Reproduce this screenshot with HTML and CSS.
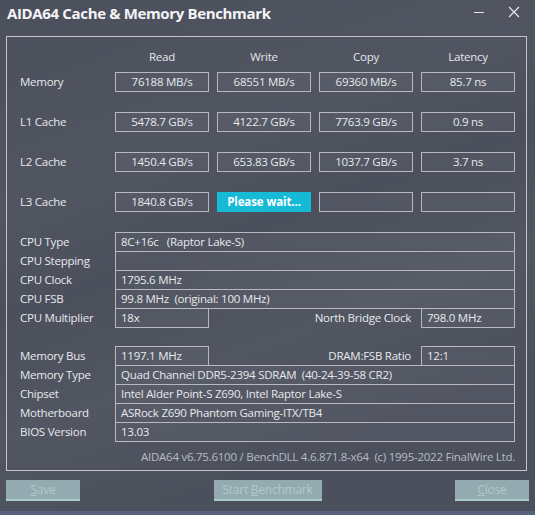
FILE: index.html
```html
<!DOCTYPE html>
<html>
<head>
<meta charset="utf-8">
<link rel="stylesheet" href="styles.css">
</head>
<body>
<div class="window">
  <div class="titlebar">
    <div class="title">AIDA64 Cache &amp; Memory Benchmark</div>
    <div class="controls">
      <svg class="ctl" width="12" height="12" viewBox="0 0 12 12"><line x1="1" y1="6.5" x2="11" y2="6.5" stroke="#e8e8ec" stroke-width="1"/></svg>
      <svg class="ctl" width="12" height="12" viewBox="0 0 12 12"><path d="M1 1 L11 11 M11 1 L1 11" stroke="#e8e8ec" stroke-width="1.2" fill="none"/></svg>
    </div>
  </div>
  <div class="frame">
    <div class="bench heads">
      <div></div>
      <div class="head">Read</div>
      <div class="head">Write</div>
      <div class="head">Copy</div>
      <div class="head">Latency</div>
    </div>
    <div class="bench rows">
      <div class="label">Memory</div>
      <div class="box">76188 MB/s</div>
      <div class="box">68551 MB/s</div>
      <div class="box">69360 MB/s</div>
      <div class="box">85.7 ns</div>

      <div class="label">L1 Cache</div>
      <div class="box">5478.7 GB/s</div>
      <div class="box">4122.7 GB/s</div>
      <div class="box">7763.9 GB/s</div>
      <div class="box">0.9 ns</div>

      <div class="label">L2 Cache</div>
      <div class="box">1450.4 GB/s</div>
      <div class="box">653.83 GB/s</div>
      <div class="box">1037.7 GB/s</div>
      <div class="box">3.7 ns</div>

      <div class="label">L3 Cache</div>
      <div class="box">1840.8 GB/s</div>
      <div class="box wait">Please wait...</div>
      <div class="box"></div>
      <div class="box"></div>
    </div>

    <div class="info first">
      <div class="irow"><div class="ilabel">CPU Type</div><div class="ival full">8C+16c&nbsp;&nbsp; (Raptor Lake-S)</div></div>
      <div class="irow"><div class="ilabel">CPU Stepping</div><div class="ival full"></div></div>
      <div class="irow"><div class="ilabel">CPU Clock</div><div class="ival full">1795.6 MHz</div></div>
      <div class="irow"><div class="ilabel">CPU FSB</div><div class="ival full">99.8 MHz&nbsp; (original: 100 MHz)</div></div>
      <div class="irow"><div class="ilabel">CPU Multiplier</div><div class="split"><div class="ival small">18x</div><div class="mid">North Bridge Clock</div><div class="ival small">798.0 MHz</div></div></div>
    </div>

    <div class="info second">
      <div class="irow"><div class="ilabel">Memory Bus</div><div class="split"><div class="ival small">1197.1 MHz</div><div class="mid">DRAM:FSB Ratio</div><div class="ival small">12:1</div></div></div>
      <div class="irow"><div class="ilabel">Memory Type</div><div class="ival full">Quad Channel DDR5-2394 SDRAM&nbsp; (40-24-39-58 CR2)</div></div>
      <div class="irow"><div class="ilabel">Chipset</div><div class="ival full">Intel Alder Point-S Z690, Intel Raptor Lake-S</div></div>
      <div class="irow"><div class="ilabel">Motherboard</div><div class="ival full">ASRock Z690 Phantom Gaming-ITX/TB4</div></div>
      <div class="irow"><div class="ilabel">BIOS Version</div><div class="ival full">13.03</div></div>
    </div>

    <div class="copyright">AIDA64 v6.75.6100 / BenchDLL 4.6.871.8-x64&nbsp; (c) 1995-2022 FinalWire Ltd.</div>
  </div>
  <div class="buttons">
    <div class="btn small-btn"><u>S</u>ave</div>
    <div class="btn wide-btn">Start <u>B</u>enchmark</div>
    <div class="btn small-btn"><u>C</u>lose</div>
  </div>
  <div class="strip"></div>
</div>
</body>
</html>
```
FILE: styles.css
```css
html, body {
  margin: 0;
  padding: 0;
}
body {
  width: 535px;
  height: 515px;
  overflow: hidden;
  font-family: "Open Sans", "Noto Sans", "Liberation Sans", sans-serif;
  font-size: 11.5px;
  letter-spacing: -0.25px;
  color: #e8e9ec;
}
.window {
  width: 535px;
  height: 515px;
  display: flex;
  flex-direction: column;
  background:
    linear-gradient(160deg, rgba(255,255,255,0.00) 0%, rgba(255,255,255,0.03) 30%, rgba(255,255,255,0.00) 45%, rgba(255,255,255,0.035) 62%, rgba(255,255,255,0.00) 80%),
    #4b505c;
}
.titlebar {
  height: 36px;
  display: flex;
  align-items: flex-start;
  justify-content: space-between;
}
.title {
  margin: 3px 0 0 7px;
  font-weight: 700;
  font-size: 15px;
  letter-spacing: -0.35px;
  color: #f4f4f6;
}
.controls {
  display: flex;
  gap: 23px;
  margin: 6px 15px 0 0;
}
.ctl {
  display: block;
}
.frame {
  box-sizing: border-box;
  margin-left: 6px;
  width: 521px;
  height: 435px;
  border: 1px solid #c4c5ca;
  padding: 10px 0 0 13px;
}
.bench {
  display: grid;
  grid-template-columns: 87px repeat(4, 94px);
  column-gap: 8px;
}
.bench.heads {
  height: 20px;
  margin-bottom: 5px;
}
.bench.rows {
  grid-template-rows: repeat(4, 20px);
  row-gap: 20px;
}
.head {
  text-align: center;
  line-height: 20px;
  color: #e6e7ea;
}
.label {
  line-height: 20px;
}
.box {
  box-sizing: border-box;
  height: 20px;
  border: 1px solid #b8b9be;
  background: rgba(255,255,255,0.04);
  text-align: center;
  line-height: 18px;
}
.box.wait {
  background: #14bad6;
  border-color: #14bad6;
  color: #ffffff;
  font-weight: 700;
  letter-spacing: -0.1px;
}
.info {
  display: flex;
  flex-direction: column;
}
.info.first {
  margin-top: 20px;
}
.info.second {
  margin-top: 19px;
}
.irow {
  display: flex;
  height: 20px;
  margin-bottom: -1px;
}
.ilabel {
  width: 95px;
  line-height: 20px;
}
.ival {
  box-sizing: border-box;
  height: 20px;
  border: 1px solid #b8b9be;
  background: rgba(255,255,255,0.04);
  padding-left: 5px;
  line-height: 18px;
  white-space: nowrap;
}
.ival.full {
  width: 400px;
}
.ival.small {
  width: 94px;
}
.split {
  display: flex;
  width: 400px;
}
.mid {
  flex: 1;
  text-align: right;
  padding-right: 10px;
  line-height: 20px;
}
.copyright {
  margin-top: 8px;
  width: 495px;
  text-align: right;
  line-height: 16px;
  color: #b9bcc4;
}
.buttons {
  display: flex;
  justify-content: space-between;
  margin: 9px 6px 0 6px;
}
.btn {
  box-sizing: border-box;
  height: 21px;
  background: #93abb0;
  border-bottom: 2px solid #a9cdca;
  color: #b3c6c9;
  text-align: center;
  line-height: 19px;
  font-size: 12px;
}
.btn u {
  text-decoration: underline;
}
.small-btn {
  width: 74px;
}
.wide-btn {
  width: 108px;
}
.strip {
  margin-top: auto;
  height: 4px;
  background: #58627a;
}
```
